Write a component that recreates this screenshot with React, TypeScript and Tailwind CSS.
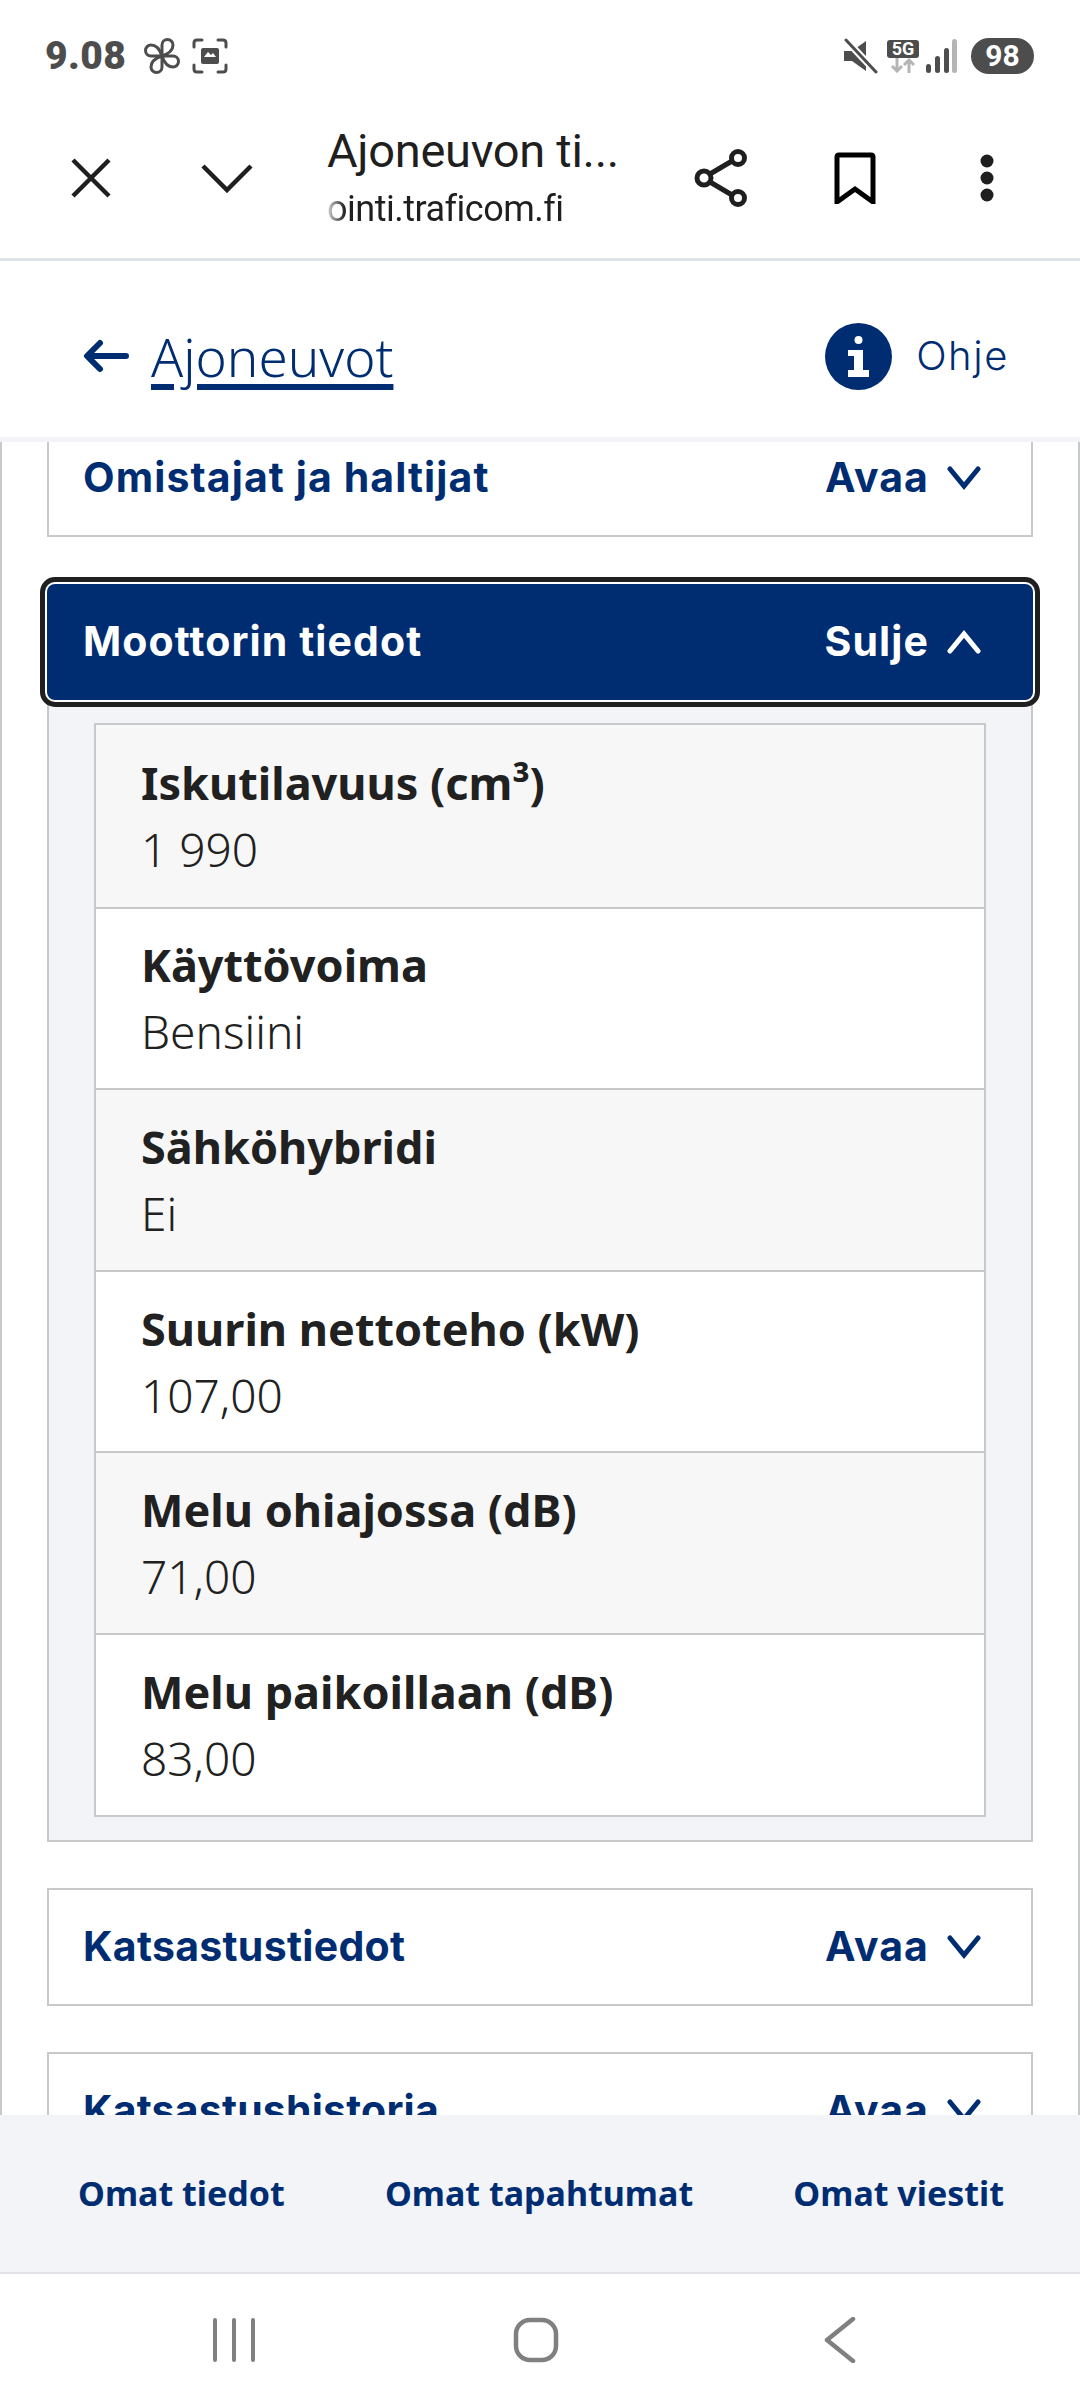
import React from "react";

const navy = "#002d72";

const engineRows = [
  { label: "Iskutilavuus (cm³)", value: "1 990" },
  { label: "Käyttövoima", value: "Bensiini" },
  { label: "Sähköhybridi", value: "Ei" },
  { label: "Suurin nettoteho (kW)", value: "107,00" },
  { label: "Melu ohiajossa (dB)", value: "71,00" },
  { label: "Melu paikoillaan (dB)", value: "83,00" },
];

function Chevron({ up = false }: { up?: boolean }) {
  return (
    <svg width="34" height="24" viewBox="0 0 34 24" fill="none" stroke="currentColor" strokeWidth="5" strokeLinecap="round" strokeLinejoin="miter">
      <path d={up ? "M3 21 L17 4 L31 21" : "M3 3 L17 20 L31 3"} />
    </svg>
  );
}

function StatusBar() {
  return (
    <div className="h-[90px] shrink-0 flex items-center pl-[45px] pr-[46px] pt-[22px] text-[#4d4d4d]">
      <span className="font-['Roboto',sans-serif] font-black text-[39px] leading-none tracking-[0.4px]">9.08</span>
      {/* fan */}
      <svg className="ml-[18px]" width="36" height="36" viewBox="0 0 36 36" fill="none" stroke="currentColor" strokeWidth="3" strokeLinejoin="round">
        {[0, 90, 180, 270].map((deg) => (
          <path key={deg} transform={`rotate(${deg} 18 18)`} d="M18 18 V7 A5.5 5.5 0 0 1 29 7 C29 12 24 16 18 18 Z" />
        ))}
      </svg>
      {/* screenshot */}
      <svg className="ml-[12px]" width="36" height="36" viewBox="0 0 36 36" fill="none" stroke="currentColor" strokeWidth="3" strokeLinecap="round">
        <path d="M2 9 V5 Q2 2 5 2 H10 M26 2 H31 Q34 2 34 5 V9 M34 27 V31 Q34 34 31 34 H26 M10 34 H5 Q2 34 2 31 V27" />
        <rect x="9" y="10" width="18" height="16" rx="2" fill="currentColor" stroke="none" />
        <path d="M12 19 L16 14 L19 17 L21 15 L24 19 Z" fill="#ffffff" stroke="none" />
      </svg>
      <div className="ml-auto flex items-center">
        {/* muted speaker */}
        <svg width="36" height="36" viewBox="0 0 36 36" fill="currentColor">
          <path d="M1 13 H9 L23 3 V33 L9 23 H1 Z" />
          <path d="M3 2 L33 34" stroke="#ffffff" strokeWidth="7" />
          <path d="M3 2 L33 34" stroke="currentColor" strokeWidth="3" strokeLinecap="round" />
        </svg>
        <div className="ml-[8px] w-[32px] flex flex-col items-center">
          <span className="w-[32px] h-[18px] rounded-[3px] bg-[#4d4d4d] text-white text-[18px] leading-[18px] text-center font-bold font-['Roboto',sans-serif]">5G</span>
          <svg width="28" height="15" viewBox="0 0 28 15" fill="none" stroke="#b5b5b5" strokeWidth="3">
            <path d="M8 0 V13 M3 8 L8 13 L13 8 M20 15 V2 M15 7 L20 2 L25 7" />
          </svg>
        </div>
        <svg className="ml-[6px]" width="32" height="34" viewBox="0 0 32 34" fill="#4d4d4d">
          <rect x="1" y="25" width="5" height="9" rx="2.5" />
          <rect x="10" y="17" width="5" height="17" rx="2.5" />
          <rect x="19" y="9" width="5" height="25" rx="2.5" />
          <rect x="27" y="0" width="5" height="34" rx="2.5" fill="#b5b5b5" />
        </svg>
        <span className="ml-[14px] w-[63px] h-[36px] rounded-full bg-[#4d4d4d] text-white text-[30px] leading-[36px] text-center font-bold font-['Roboto',sans-serif]">98</span>
      </div>
    </div>
  );
}

function BrowserBar() {
  return (
    <div className="h-[171px] shrink-0 flex items-center pl-[71px] border-b-[3px] border-[#dfe3e5] text-[#1f1f1f] pt-[8px]">
      <svg width="40" height="40" viewBox="0 0 40 40" fill="none" stroke="currentColor" strokeWidth="4.5">
        <path d="M2 2 L38 38 M38 2 L2 38" />
      </svg>
      <svg className="ml-[90px]" width="52" height="30" viewBox="0 0 52 30" fill="none" stroke="currentColor" strokeWidth="4.5">
        <path d="M2 3 L26 27 L50 3" />
      </svg>
      <div className="ml-[74px] w-[300px] flex flex-col font-['Roboto',sans-serif] -mt-[2px]">
        <span className="text-[47px] leading-[58px] tracking-[-0.3px] whitespace-nowrap">Ajoneuvon ti...</span>
        <span className="text-[36px] leading-[46px] tracking-[-0.5px] whitespace-nowrap mt-[6px] bg-[linear-gradient(90deg,#d8d8d8_0px,#1f1f1f_18px)] bg-clip-text text-transparent">ointi.traficom.fi</span>
      </div>
      <svg className="ml-[67px]" width="54" height="58" viewBox="0 0 54 58" fill="none" stroke="currentColor" strokeWidth="5">
        <circle cx="10" cy="29" r="7" />
        <circle cx="44" cy="9" r="6.5" />
        <circle cx="44" cy="49" r="6.5" />
        <path d="M16 25 L38 12 M16 33 L38 46" />
      </svg>
      <svg className="ml-[86px]" width="42" height="52" viewBox="0 0 42 52" fill="none" stroke="#000000" strokeWidth="5">
        <path d="M3 50 V5 Q3 3 5 3 H37 Q39 3 39 5 V50 L21 37 Z" />
      </svg>
      <svg className="ml-[103px]" width="16" height="48" viewBox="0 0 16 48" fill="currentColor">
        <circle cx="8" cy="7" r="6.5" />
        <circle cx="8" cy="24" r="6.5" />
        <circle cx="8" cy="41" r="6.5" />
      </svg>
    </div>
  );
}

function PageHeader() {
  return (
    <div className="h-[181px] shrink-0 flex items-center pl-[83px] pr-[71px] border-b-[5px] border-[#f2f4f8] text-[#002d72] pt-[14px]">
      <svg width="46" height="34" viewBox="0 0 46 34" fill="none" stroke={navy} strokeWidth="6" strokeLinecap="round" strokeLinejoin="round">
        <path d="M43 17 H5 M17 4 L4 17 L17 30" />
      </svg>
      <span className="ml-[22px] font-['Noto_Sans',sans-serif] font-light text-[53px] leading-none underline decoration-[6px] underline-offset-[7px]">Ajoneuvot</span>
      <svg className="ml-auto" width="67" height="67" viewBox="0 0 67 67">
        <circle cx="33.5" cy="33.5" r="33.5" fill={navy} />
        <circle cx="33.5" cy="17" r="4" fill="#ffffff" />
        <path d="M23 27 H38 V47 H44 V54 H23 V47 H29 V33 H23 Z" fill="#ffffff" />
      </svg>
      <span className="ml-[24px] font-['Inter',sans-serif] font-light text-[40px] leading-none tracking-[1.6px]">Ohje</span>
    </div>
  );
}

function CollapsedItem({ title, className = "", titleClass = "tracking-[1.1px]" }: { title: string; className?: string; titleClass?: string }) {
  return (
    <div className={`h-[118px] mx-[45px] flex items-center justify-between bg-white border-2 border-[#c8c9cb] pl-[34px] pr-[50px] text-[#002d72] font-['Inter',sans-serif] font-bold text-[41px] ${className}`}>
      <span className={titleClass}>{title}</span>
      <span className="flex items-center gap-[18px] tracking-[1.1px]">
        Avaa
        <Chevron />
      </span>
    </div>
  );
}

function EnginePanel() {
  return (
    <div className="mx-[45px]">
      <div className="relative z-10 h-[116px] rounded-lg bg-[#002d72] flex items-center justify-between pl-[36px] pr-[52px] text-white font-['Inter',sans-serif] font-bold text-[41px] tracking-[1.1px] shadow-[0_0_0_2px_#ffffff,0_0_0_7px_#1f1f1f]">
        <span>Moottorin tiedot</span>
        <span className="flex items-center gap-[18px]">
          Sulje
          <Chevron up />
        </span>
      </div>
      <div className="bg-[#f2f4f8] border-x-2 border-b-2 border-[#c8c9cb] pt-[23px] pb-[23px] px-[45px]">
        <div className="border-2 border-[#c8c9cb] bg-white">
          {engineRows.map((row, i) => (
            <div
              key={row.label}
              className={`h-[181.6px] flex flex-col justify-center pl-[45px] font-['Noto_Sans',sans-serif] text-[#212121] ${i % 2 === 0 ? "bg-[#f7f7f8]" : "bg-white"} ${i > 0 ? "border-t-2 border-[#c8c9cb]" : ""}`}
            >
              <span className="font-bold text-[45px] leading-[66px]">{row.label}</span>
              <span className="font-light text-[46px] leading-[66px]">{row.value}</span>
            </div>
          ))}
        </div>
      </div>
    </div>
  );
}

function BottomLinks() {
  return (
    <div className="h-[159px] shrink-0 flex items-center justify-between pl-[78px] pr-[76px] bg-[#f2f4f8] border-b-2 border-[#e2e3e6] font-['Noto_Sans',sans-serif] font-bold text-[34px] text-[#002d72]">
      <span>Omat tiedot</span>
      <span>Omat tapahtumat</span>
      <span>Omat viestit</span>
    </div>
  );
}

function AndroidNav() {
  return (
    <div className="h-[134px] shrink-0 flex items-center pl-[212px] pb-[2px] bg-white">
      <svg width="44" height="44" viewBox="0 0 44 44" fill="none" stroke="#808080" strokeWidth="4" strokeLinecap="round">
        <path d="M3 2 V42 M22 2 V42 M41 2 V42" />
      </svg>
      <svg className="ml-[257px]" width="46" height="46" viewBox="0 0 46 46" fill="none" stroke="#808080" strokeWidth="4.5">
        <rect x="3" y="3" width="40" height="40" rx="14" />
      </svg>
      <svg className="ml-[265px]" width="32" height="46" viewBox="0 0 32 46" fill="none" stroke="#808080" strokeWidth="4.5" strokeLinecap="round" strokeLinejoin="round">
        <path d="M29 2 L3 23 L29 44" />
      </svg>
    </div>
  );
}

export default function App() {
  return (
    <div className="w-[1080px] h-[2408px] flex flex-col bg-white overflow-hidden">
      <StatusBar />
      <BrowserBar />
      <PageHeader />
      {/* scrolling page body, clipped above and below */}
      <div className="flex-1 min-h-0 overflow-hidden border-x-2 border-[#c8c9cb]">
        <div className="flex flex-col">
          <CollapsedItem title="Omistajat ja haltijat" className="-mt-[23px]" />
          <div className="h-[47px]" />
          <EnginePanel />
          <div className="h-[46px]" />
          <CollapsedItem title="Katsastustiedot" titleClass="tracking-[0.3px]" />
          <div className="h-[46px]" />
          <CollapsedItem title="Katsastushistoria" titleClass="tracking-[0.2px]" />
        </div>
      </div>
      <BottomLinks />
      <AndroidNav />
    </div>
  );
}
